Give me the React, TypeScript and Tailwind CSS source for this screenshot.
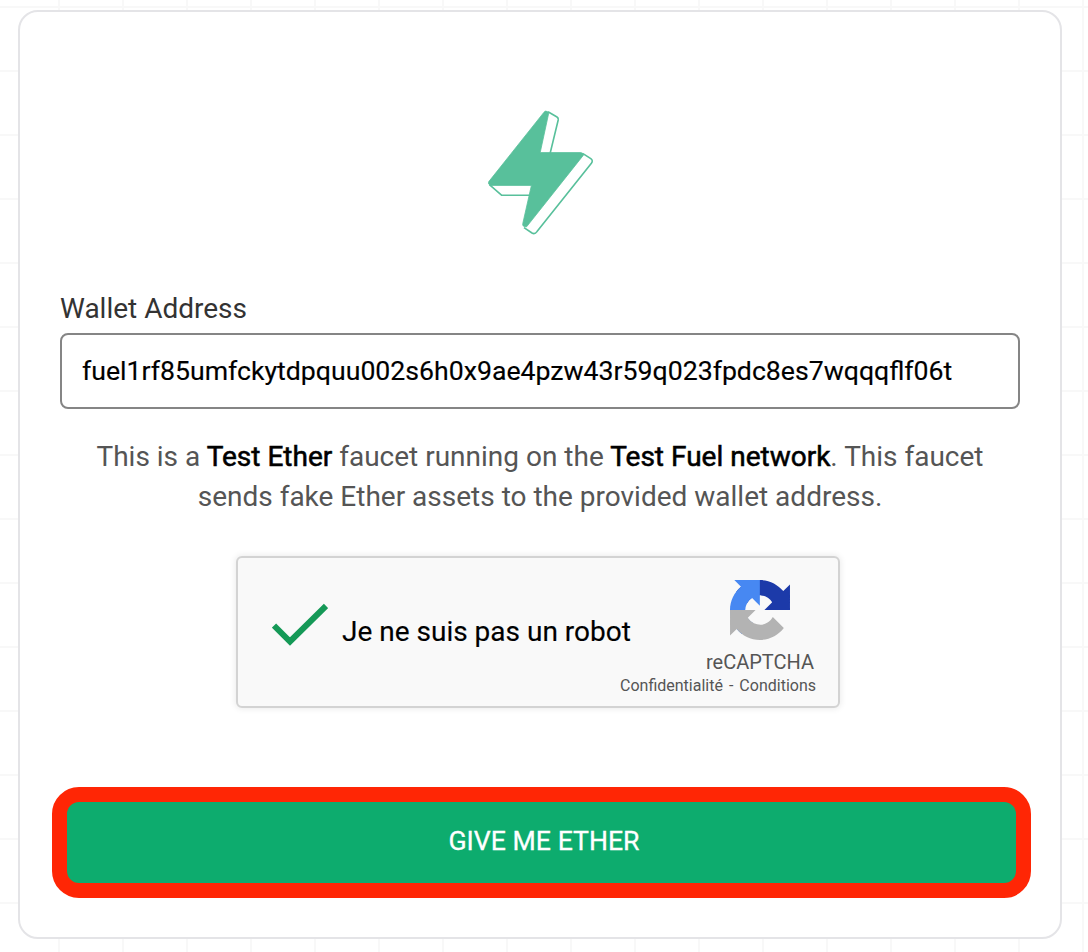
import { useState } from "react";
import type { ReactNode } from "react";

function FuelLogo() {
  return (
    <svg
      width="108"
      height="128"
      viewBox="486 109 108 128"
      fill="none"
      stroke="#58c09b"
      strokeWidth="1.6"
      strokeLinejoin="round"
    >
      <path d="M548 111.8L557 117Q558.6 118 558.2 120L550.2 153" />
      <path d="M583 153.6L590.8 158.6Q593.4 160.6 591.4 163.2L537 231.6Q534.8 234.6 532 233L524 227.6" />
      <path d="M489.4 184.6L501.8 195.3H530" />
      <path
        d="M544 112.2Q545.4 110.4 547.4 111.6L548.8 112.8L540.2 152.6H580.8Q584.4 153.4 583.4 155.2L526.6 226.8Q522 227 522.8 223.4L531.4 185.4H490.4Q487.6 184.4 488.8 181.6Z"
        fill="#58c09b"
        strokeWidth="0.8"
      />
    </svg>
  );
}

function RecaptchaLogo() {
  return (
    <svg width="60" height="60" viewBox="0 0 64 64">
      <path
        fill="#1c3aa9"
        d="M64 31.955l-.033-1.37V4.687l-7.16 7.16C50.948 4.674 42.033.093 32.05.093c-10.4 0-19.622 4.96-25.458 12.64l11.736 11.86a15.55 15.55 0 0 1 4.754-5.334c2.05-1.6 4.952-2.906 8.968-2.906.485 0 .86.057 1.135.163 4.976.393 9.288 3.14 11.828 7.124l-8.307 8.307L64 31.953"
      />
      <path
        fill="#4788f2"
        d="M31.862.094l-1.37.033H4.594l7.16 7.16C4.58 13.147 0 22.06 0 32.046c0 10.4 4.96 19.622 12.64 25.458L24.5 45.768a15.55 15.55 0 0 1-5.334-4.754c-1.6-2.05-2.906-4.952-2.906-8.968 0-.485.057-.86.163-1.135.393-4.976 3.14-9.288 7.124-11.828l8.307 8.307L31.86.095"
      />
      <path
        fill="#b3b3b3"
        d="M.001 32.045l.033 1.37v25.898l7.16-7.16c5.86 7.173 14.774 11.754 24.76 11.754 10.4 0 19.622-4.96 25.458-12.64l-11.736-11.86a15.55 15.55 0 0 1-4.754 5.334c-2.05 1.6-4.952 2.906-8.968 2.906-.485 0-.86-.057-1.135-.163-4.976-.393-9.288-3.14-11.828-7.124l8.307-8.307c-10.522.04-22.4.066-27.295-.005"
      />
    </svg>
  );
}

function Recaptcha() {
  return (
    <div className="flex w-[604px] h-[152px] ml-[176px] border-2 border-[#d3d3d3] rounded-md bg-[#f9f9f9] shadow-[0_0_6px_1px_rgba(0,0,0,0.08)]">
      <div className="flex flex-1 pl-[34px]">
        <svg className="mt-[45px]" width="56" height="46" viewBox="0 0 56 46" fill="none">
          <path d="M2 22.5L18 38.5L54 3" stroke="#159957" strokeWidth="6" />
        </svg>
        <span className="pl-[14px] pt-[58px] text-[28px] leading-8 text-black whitespace-nowrap [-webkit-text-stroke:0.15px]">
          Je ne suis pas un robot
        </span>
      </div>
      <div className="flex flex-col items-end w-[200px] pt-[22px] text-[#555]">
        <div className="mr-[48px]">
          <RecaptchaLogo />
        </div>
        <div className="mt-[10px] mr-[24px] text-[20px] leading-6">reCAPTCHA</div>
        <div className="flex mt-[2px] mr-[22px] text-[16px] leading-5 whitespace-nowrap">
          <span>Confidentialité</span>
          <span className="mx-1.5">-</span>
          <span>Conditions</span>
        </div>
      </div>
    </div>
  );
}

function Strong({ children }: { children: ReactNode }) {
  return <span className="text-black [-webkit-text-stroke:0.55px]">{children}</span>;
}

export default function App() {
  const [address, setAddress] = useState(
    "fuel1rf85umfckytdpquu002s6h0x9ae4pzw43r59q023fpdc8es7wqqqflf06t"
  );

  return (
    <div className="w-[1088px] h-[952px] overflow-hidden pt-[10px] pl-[18px] bg-white font-[Roboto,sans-serif] bg-[linear-gradient(to_right,#f8f8f8_2px,transparent_2px),linear-gradient(to_bottom,#f8f8f8_2px,transparent_2px)] bg-[size:64px_64px] bg-[position:58px_6px]">
      <div className="flex flex-col w-[1044px] h-[929px] px-10 border-2 border-[#e4e4e7] rounded-[20px] bg-white">
        <div className="flex justify-center pt-[97px]">
          <FuelLogo />
        </div>

        <label
          htmlFor="address"
          className="mt-[56px] text-[28px] leading-8 text-[#333]"
        >
          Wallet Address
        </label>
        <input
          id="address"
          value={address}
          onChange={(e) => setAddress(e.target.value)}
          className="mt-[8px] h-[76px] px-5 border-2 border-[#858585] rounded-lg bg-white text-[26.66px] text-black outline-none [-webkit-text-stroke:0.15px]"
        />

        <p className="mt-[28px] text-center text-[28px] leading-10 text-[#555]">
          This is a <Strong>Test Ether</Strong> faucet running on the{" "}
          <Strong>Test Fuel network</Strong>. This faucet
          <br />
          sends fake Ether assets to the provided wallet address.
        </p>

        <div className="mt-[39px]">
          <Recaptcha />
        </div>

        <button className="mt-[79px] -ml-2 w-[979px] h-[111px] shrink-0 pl-[5px] pb-px border-[15px] border-[#ff2605] rounded-[27px] bg-[#0dac6e] text-[26.66px] text-white [-webkit-text-stroke:0.3px]">
          GIVE ME ETHER
        </button>
      </div>
    </div>
  );
}
